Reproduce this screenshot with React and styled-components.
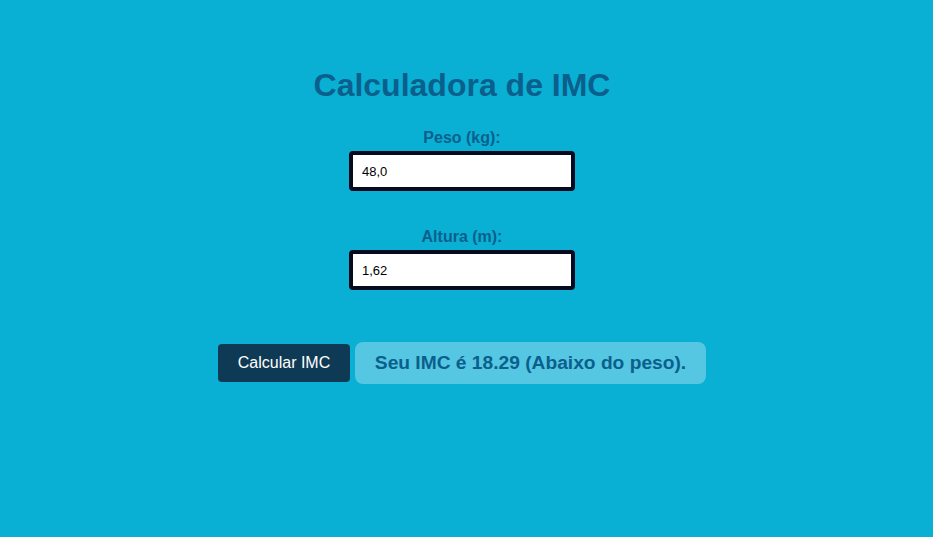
import React, { useState } from "react";
import styled, { createGlobalStyle } from "styled-components";

const GlobalStyle = createGlobalStyle`
  html, body {
    margin: 0;
    padding: 0;
    background: #0aafd4;
    font-family: "Liberation Sans", Arial, sans-serif;
  }
`

const Page = styled.div`
  width: 100%;
  min-height: 537px;
  display: flex;
  flex-direction: column;
  align-items: center;
  padding: 66px 9px 0 0;
  box-sizing: border-box;
`

const Title = styled.h1`
  margin: 0 0 25px;
  font-size: 32px;
  line-height: 38px;
  font-weight: bold;
  color: #0b5f8c;
`

const Field = styled.div`
  display: flex;
  flex-direction: column;
  align-items: center;
  margin-bottom: ${p => p.$gap}px;
`

const Label = styled.label`
  font-size: 16px;
  line-height: 18px;
  font-weight: bold;
  color: #0b5f8c;
  margin-bottom: 4px;
`

const Input = styled.input`
  width: 226px;
  height: 40px;
  box-sizing: border-box;
  border: 4px solid #050a1e;
  border-radius: 4px;
  background: #fff;
  padding: 0 9px;
  font-family: "Liberation Sans", Arial, sans-serif;
  font-size: 13px;
  color: #000;
  outline: none;
`

const Row = styled.div`
  display: flex;
  align-items: center;
  gap: 5px;
`

const Button = styled.button`
  width: 132px;
  height: 38px;
  border: none;
  border-radius: 4px;
  background: #0f3a55;
  color: #fff;
  font-family: "Liberation Sans", Arial, sans-serif;
  font-size: 16px;
  cursor: pointer;
`

const Result = styled.div`
  width: 351px;
  height: 42px;
  box-sizing: border-box;
  display: flex;
  align-items: center;
  justify-content: center;
  border-radius: 8px;
  background: #55c7e2;
  color: #0b5f8c;
  font-size: 19.2px;
  font-weight: bold;
`

function App() {
  const [peso, setPeso] = useState("48,0");
  const [altura, setAltura] = useState("1,62");

  return (
    <Page>
      <GlobalStyle />
      <Title>Calculadora de IMC</Title>
      <Field $gap={37}>
        <Label>Peso (kg):</Label>
        <Input value={peso} onChange={e => setPeso(e.target.value)} />
      </Field>
      <Field $gap={52}>
        <Label>Altura (m):</Label>
        <Input value={altura} onChange={e => setAltura(e.target.value)} />
      </Field>
      <Row>
        <Button>Calcular IMC</Button>
        <Result>Seu IMC é 18.29 (Abaixo do peso).</Result>
      </Row>
    </Page>
  )
}

export default App
